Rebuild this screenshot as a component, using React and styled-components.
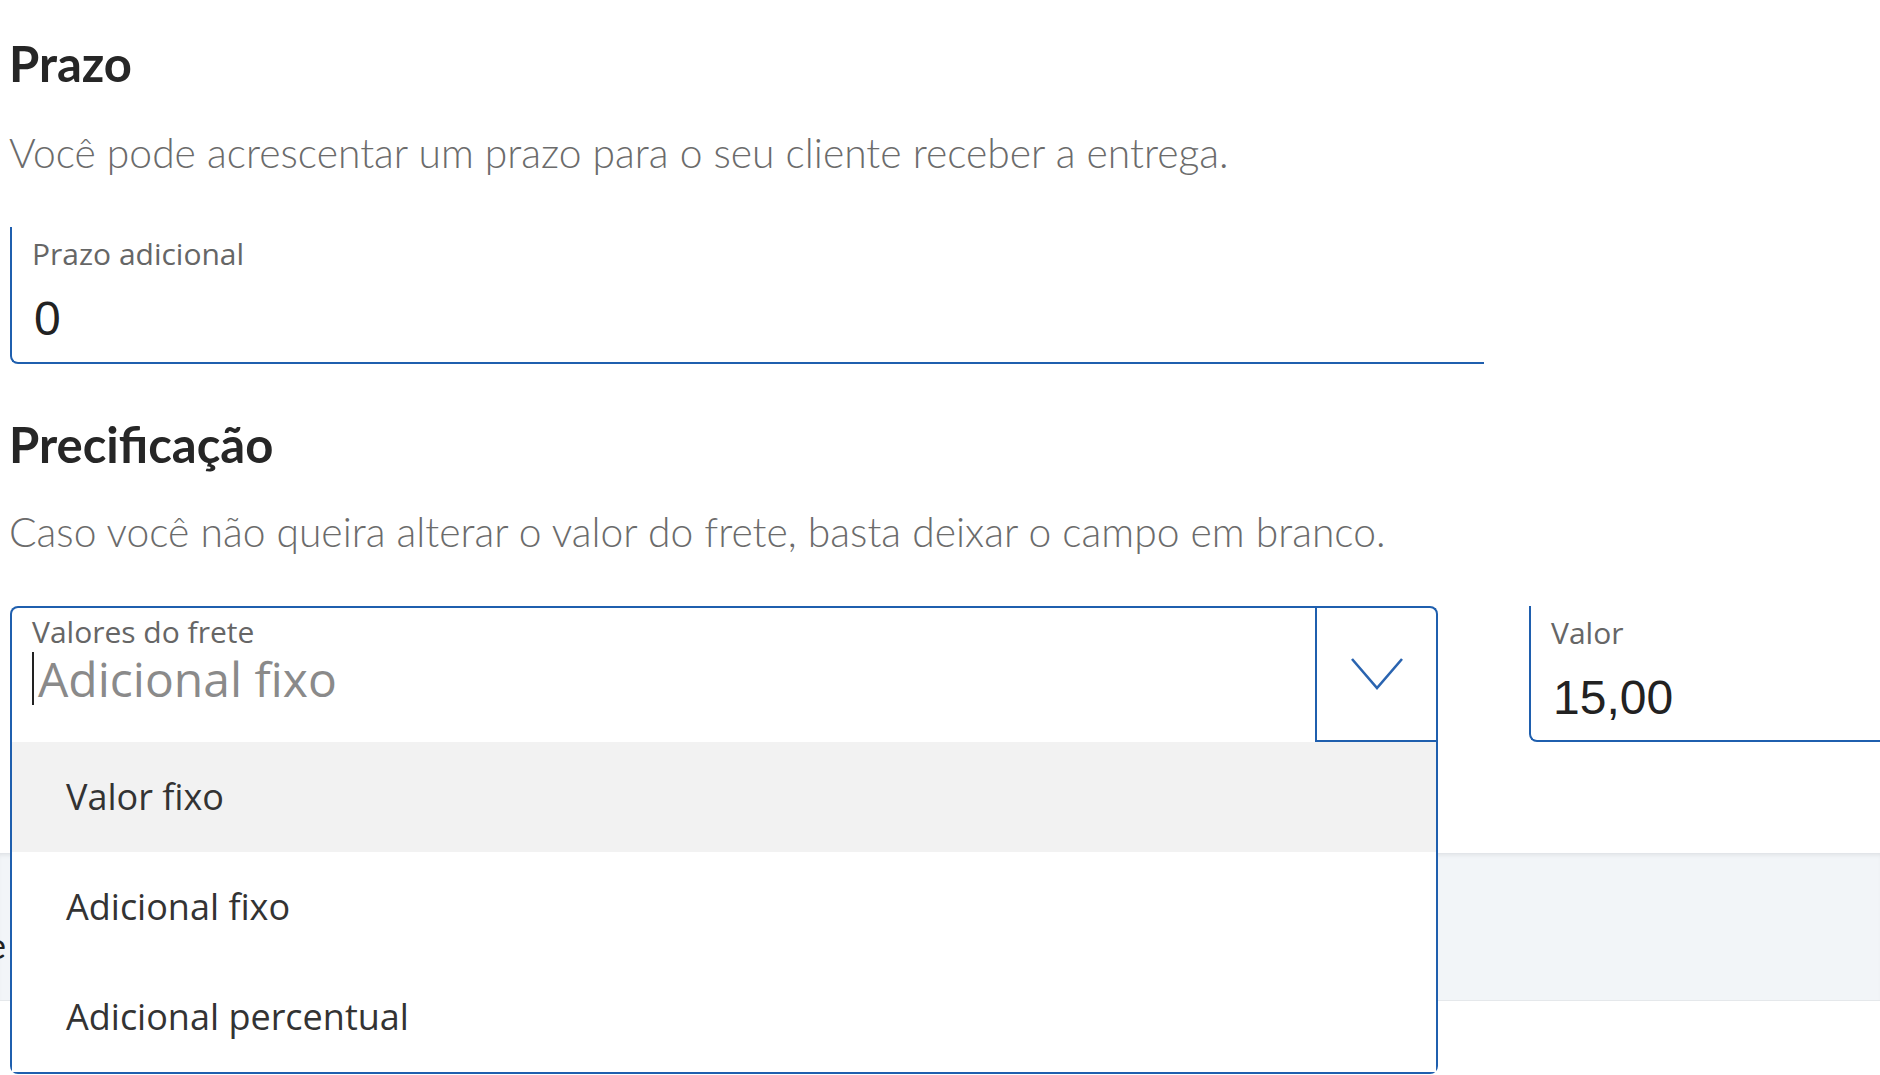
import React from "react";
import styled, { createGlobalStyle } from "styled-components";

const BLUE = "#1f5fae";

const GlobalStyle = createGlobalStyle`
  html, body {
    margin: 0;
    padding: 0;
    background: #ffffff;
    overflow: hidden;
  }
  * {
    box-sizing: border-box;
  }
`;

const Page = styled.div`
  width: 1880px;
  height: 1075px;
  overflow: hidden;
  position: relative;
`;

const Content = styled.div`
  padding-left: 10px;
  display: flex;
  flex-direction: column;
`;

const SectionTitle = styled.h2`
  font-family: Lato, "Open Sans", sans-serif;
  font-weight: 700;
  font-size: 49px;
  line-height: 1.2;
  color: #262626;
  margin: ${({ first }) => (first ? "34px" : "51px")} 0 0 -1px;
`;

const Description = styled.p`
  font-family: Lato, "Open Sans", sans-serif;
  font-weight: 300;
  font-size: 40.8px;
  line-height: 1.2;
  color: #6b6b6b;
  margin: ${({ tight }) => (tight ? "34px" : "36px")} 0 0 -1px;
`;

const Field = styled.div`
  display: flex;
  flex-direction: column;
  width: ${({ width }) => width || "auto"};
  flex: ${({ grow }) => (grow ? 1 : "none")};
  height: ${({ tall }) => (tall ? "137px" : "136px")};
  margin-top: ${({ top }) => top || "0"};
  padding: 7px 20px 0 20px;
  border-left: 2px solid ${BLUE};
  border-bottom: 2px solid ${BLUE};
  border-bottom-left-radius: 8px;
`;

const FieldLabel = styled.label`
  font-family: "Open Sans", "Noto Sans", sans-serif;
  font-size: 30px;
  line-height: 1.3;
  color: #666666;
`;

const FieldValue = styled.div`
  margin-top: 15px;
  padding-left: 2px;
  font-family: "Liberation Sans", Arial, sans-serif;
  font-size: 48px;
  line-height: 1.3;
  color: #222222;
`;

const Row = styled.div`
  display: flex;
  align-items: flex-start;
  gap: 91px;
  margin-top: 49px;
  width: 2100px;
  position: relative;
  z-index: 5;
`;

const SelectBox = styled.div`
  position: relative;
  width: 1428px;
  height: 136px;
  display: flex;
  border: 2px solid ${BLUE};
  border-bottom: none;
  border-radius: 8px 8px 0 0;
  background: #fff;
`;

const SelectInput = styled.div`
  flex: 1;
  display: flex;
  flex-direction: column;
  padding: 4px 20px 0 20px;
`;

const PlaceholderRow = styled.div`
  display: flex;
  align-items: center;
  margin-top: -3px;
`;

const Caret = styled.span`
  width: 2px;
  height: 53px;
  background: #222;
  margin-right: 4px;
`;

const Placeholder = styled.span`
  font-family: "Open Sans", "Noto Sans", sans-serif;
  font-size: 48px;
  line-height: 1.3;
  color: #8a8a8a;
`;

const ToggleButton = styled.div`
  width: 121px;
  height: 134px;
  display: flex;
  align-items: center;
  justify-content: center;
  border-left: 2px solid ${BLUE};
  border-bottom: 2px solid ${BLUE};
`;

const Menu = styled.ul`
  position: absolute;
  top: 100%;
  left: -2px;
  right: -2px;
  margin: 0;
  padding: 0;
  list-style: none;
  background: #fff;
  border: 2px solid ${BLUE};
  border-top: none;
  border-radius: 0 0 8px 8px;
  z-index: 10;
`;

const MenuItem = styled.li`
  height: 110px;
  display: flex;
  align-items: center;
  padding-left: 54px;
  font-family: "Open Sans", "Noto Sans", sans-serif;
  font-size: 36px;
  color: #333333;
  background: ${({ active }) => (active ? "#f2f2f2" : "#ffffff")};
`;

const Band = styled.div`
  margin-top: 111px;
  margin-left: -10px;
  height: 148px;
  background: #f2f5f8;
  border-top: 1px solid #e2e5e9;
  border-bottom: 1px solid #e5e8eb;
  box-shadow: inset 0 3px 4px -2px rgba(0, 0, 0, 0.08);
  display: flex;
  align-items: center;
  padding-top: 36px;
  overflow: hidden;
`;

const BandText = styled.span`
  font-family: Lato, "Open Sans", sans-serif;
  font-size: 36px;
  color: #222;
  margin-left: -13px;
`;

const Chevron = () => (
  <svg width="54" height="36" viewBox="0 0 54 36" fill="none">
    <polyline
      points="2,3 27,32 52,3"
      stroke="#2a64b0"
      strokeWidth="2.6"
      strokeLinejoin="miter"
    />
  </svg>
);

const options = ["Valor fixo", "Adicional fixo", "Adicional percentual"];

export default function App() {
  return (
    <Page>
      <GlobalStyle />
      <Content>
        <SectionTitle first>Prazo</SectionTitle>
        <Description>
          Você pode acrescentar um prazo para o seu cliente receber a entrega.
        </Description>

        <Field width="1474px" top="49px" tall>
          <FieldLabel>Prazo adicional</FieldLabel>
          <FieldValue>0</FieldValue>
        </Field>

        <SectionTitle>Precificação</SectionTitle>
        <Description tight>
          Caso você não queira alterar o valor do frete, basta deixar o campo em branco.
        </Description>

        <Row>
          <SelectBox>
            <SelectInput>
              <FieldLabel>Valores do frete</FieldLabel>
              <PlaceholderRow>
                <Caret />
                <Placeholder>Adicional fixo</Placeholder>
              </PlaceholderRow>
            </SelectInput>
            <ToggleButton>
              <Chevron />
            </ToggleButton>
            <Menu>
              {options.map((opt, i) => (
                <MenuItem key={opt} active={i === 0}>
                  {opt}
                </MenuItem>
              ))}
            </Menu>
          </SelectBox>

          <Field grow>
            <FieldLabel>Valor</FieldLabel>
            <FieldValue>15,00</FieldValue>
          </Field>
        </Row>

        <Band>
          <BandText>e</BandText>
        </Band>
      </Content>
    </Page>
  );
}
